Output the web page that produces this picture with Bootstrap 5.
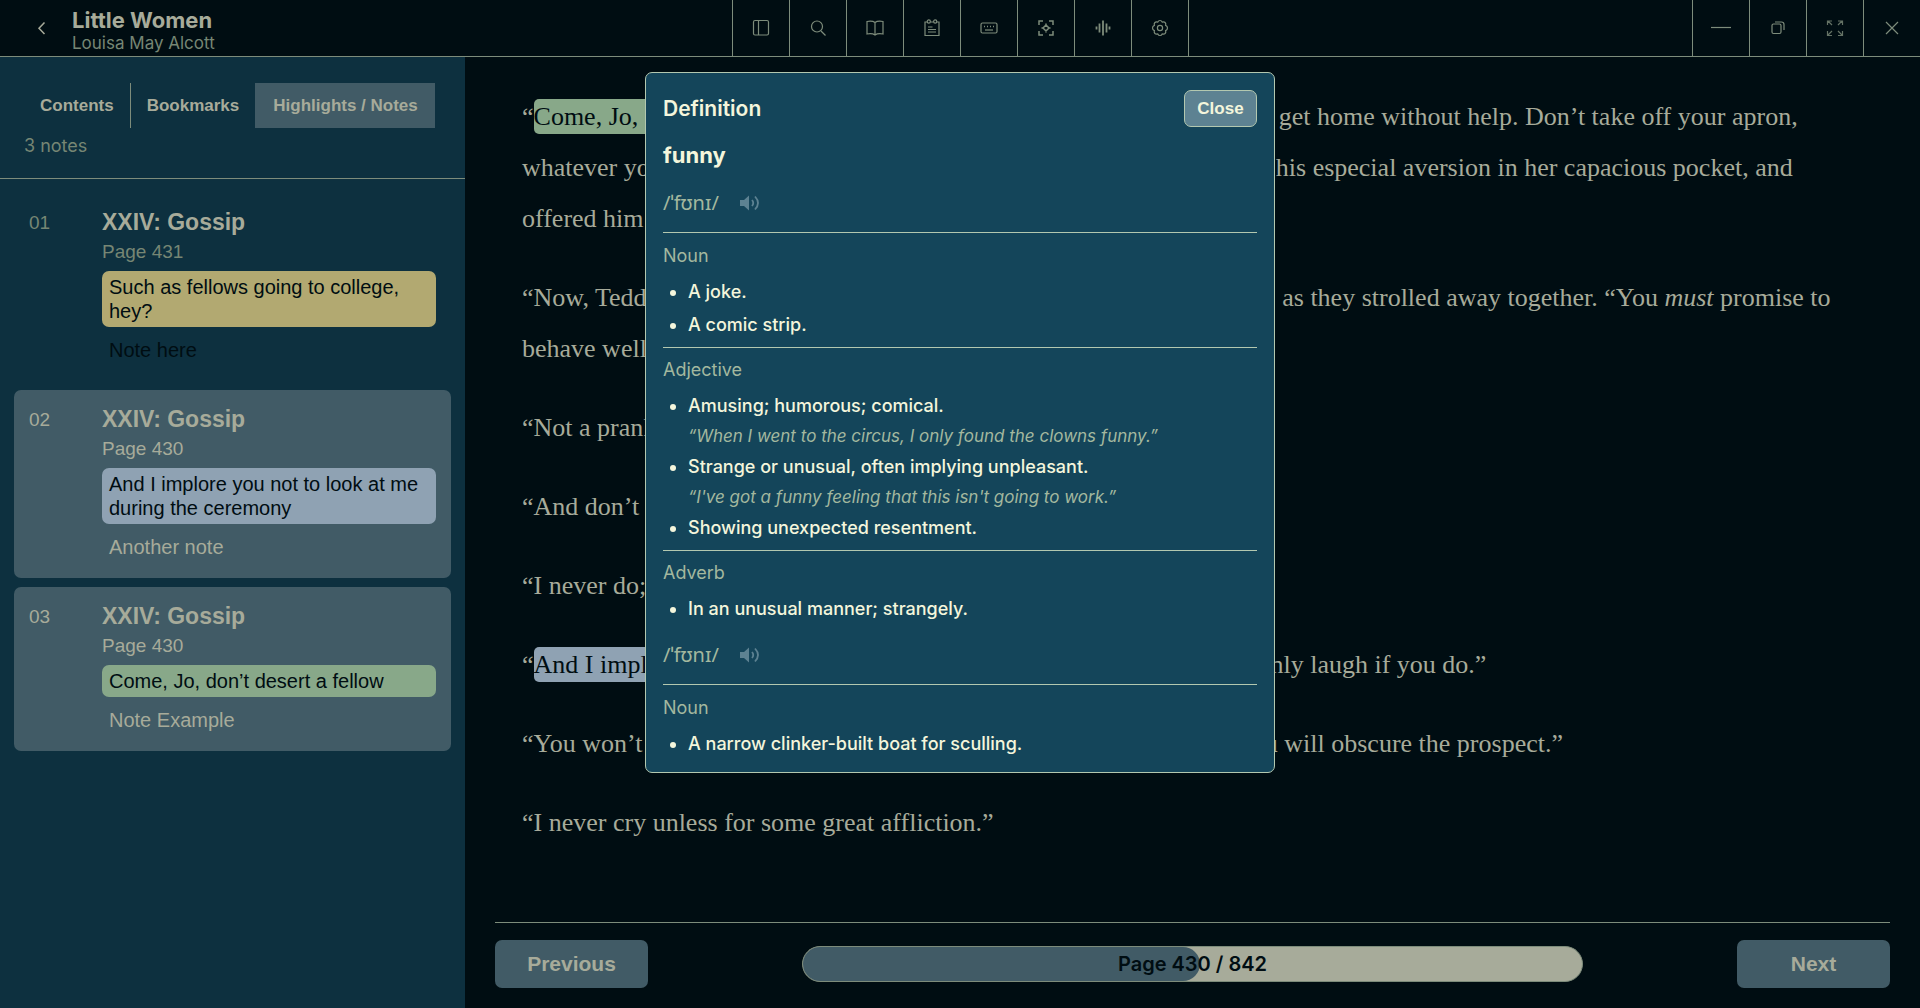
<!DOCTYPE html>
<html lang="en">
<head>
<meta charset="utf-8">
<meta name="viewport" content="width=device-width, initial-scale=1">
<title>Little Women – Reader</title>
<link href="https://cdn.jsdelivr.net/npm/bootstrap@5.3.0/dist/css/bootstrap.min.css" rel="stylesheet">
<style>
  :root { --ink: #000d12; --pane: #0d303f; --raised: #415b66; --rule: #7d8c7b; --soft: #a7ab9a; --dim: #768674; --pop: #14455a; --pop-line: #b3c8b0; --cream: #f4f6dc; }
  body { background: var(--ink); color: var(--soft); font-family: Inter, sans-serif; font-size: 18px; line-height: 24px; }
  .sans { font-family: "Liberation Sans", Arial, sans-serif; }
  .app-bar { height: 57px; border-bottom: 1px solid var(--rule); }
  .app-side { flex: 1 1 0; }
  .book-title { font-size: 22px; line-height: 25px; font-weight: 700; }
  .book-author { font-size: 17px; line-height: 20px; color: var(--dim); }
  .tool { width: 57px; height: 56px; border: 0; border-left: 1px solid var(--rule); background: none; color: var(--rule); padding: 0; }
  .tools { border-right: 1px solid var(--rule); }
  .tool svg, .back svg { fill: none; stroke: currentColor; stroke-width: 1.2; display: block; margin: auto; }
  .back { width: 72px; padding: 0 0 0 14px; border: 0; background: none; color: var(--soft); }
  .side-pane { width: 465px; background: var(--pane); }
  .side-top { border-bottom: 1px solid var(--rule); padding: 26px 24px 0; height: 122px; }
  .tab { height: 45px; padding: 0 16px; border: 0; background: none; color: var(--soft); font-weight: 700; font-size: 17px; }
  .tab + .tab { border-left: 1px solid var(--rule); }
  .tab.tab.on { background: var(--raised); border-left-color: var(--raised); padding: 0 17px; }
  .count { color: var(--dim); margin-top: 6px; }
  .notes { padding: 14px; gap: 9px; }
  .note-item { padding: 14px 15px 19px; border-radius: 7px; font-size: 20px; }
  .note-item.lit { background: var(--raised); }
  .note-no { width: 73px; flex: none; font-size: 19px; line-height: 32px; }
  .note-ttl { font-size: 23px; line-height: 31px; font-weight: 700; margin: 0; }
  .note-pg { font-size: 19px; line-height: 28px; }
  .quote { color: var(--ink); border-radius: 7px; padding: 4px 7px; margin: 5px 0 11px; }
  .note-txt { padding: 0 7px; }
  .note-txt.inked { color: var(--ink); }
  .muted { color: var(--dim); }
  .yel { background: #b2a971; } .blu { background: #8fa2b3; } .grn { background: #88a889; }
  .page-text { font: 26px/51px "Liberation Serif", "Times New Roman", serif; padding: 34px 27px 0; }
  .page-text p { margin: 0 0 28px; }
  .page-text mark { color: var(--ink); padding: 3px 0; border-radius: 5px; }
  .page-text mark.grn { background: #88a889; } .page-text mark.blu { background: #8fa2b3; }
  .reader { padding: 0 30px; }
  .pager { border-top: 1px solid var(--rule); padding: 17px 0 20px; }
  .turn { width: 153px; height: 48px; border: 0; border-radius: 7px; background: var(--raised); color: var(--soft); font-size: 21px; font-weight: 700; }
  .meter { width: 56%; height: 36px; border: 1px solid var(--rule); border-radius: 18px; background: var(--soft); }
  .meter-fill { background: var(--raised); border-radius: 18px; }
  .meter-label { color: var(--ink); font-size: 20px; font-weight: 600; }
  .definition { top: 72px; width: 630px; background: var(--pop); border: 1px solid var(--pop-line); border-radius: 7px; padding: 17px 17px 6px; color: var(--cream); z-index: 10; }
  .definition h2 { font-size: 21px; line-height: 32px; font-weight: 600; margin: 0; }
  .definition h3 { font-size: 22px; line-height: 32px; font-weight: 700; margin: 12px 0 18px; }
  .close-btn { height: 37px; width: 73px; border: 1px solid var(--pop-line); border-radius: 7px; background: #5d8292; color: var(--cream); font-size: 17px; font-weight: 700; }
  .phon { margin: 10px 0 15px; height: 28px; color: #a3b89f; gap: 20px; font-family: "Noto Sans", sans-serif; font-size: 20px; }
  .speak { border: 0; padding: 0; background: none; color: #5d8292; }
  .sense { border-top: 1px solid var(--pop-line); padding: 8px 0 6px; }
  .phon + .sense { padding-top: 9px; }
  .kind { color: #a3b89f; line-height: 28px; margin-bottom: 5px; font-size: 18px; font-weight: 400; }
  .sense ul { margin: 0; padding-left: 25px; font-weight: 500; line-height: 33px; }
  .sense q { display: block; quotes: none; font-style: italic; font-weight: 400; font-size: 17px; line-height: 28px; color: #a3b89f; }
</style>
</head>
<body class="min-vh-100 d-flex flex-column">

<header class="app-bar d-flex">
  <div class="app-side d-flex">
    <button class="back" aria-label="Back"><svg width="16" height="16" viewBox="0 0 16 16"><path d="M9.500 2.500 4 8.300l5.500 5.700" stroke-width="1.500"/></svg></button>
    <div class="pt-2">
      <div class="book-title">Little Women</div>
      <div class="book-author">Louisa May Alcott</div>
    </div>
  </div>
  <nav class="tools d-flex" aria-label="Tools">
    <button class="tool" aria-label="Sidebar"><svg width="18" height="18" viewBox="0 0 18 18"><rect x="1.500" y="1.500" width="15" height="14.500" rx="1.500"/><path d="M6.500 1.500V16"/></svg></button>
    <button class="tool" aria-label="Search"><svg width="18" height="18" viewBox="0 0 18 18"><circle cx="8" cy="7.500" r="5.500"/><path d="m12 12 4.500 4.500"/></svg></button>
    <button class="tool" aria-label="Read"><svg width="18" height="18" viewBox="0 0 18 18"><path d="M9 3.500C7 2 4 2 1 2.500v12.500c3-.6 6-.4 8 1 2-1.400 5-1.600 8-1V2.500C14 2 11 2 9 3.500zV16"/></svg></button>
    <button class="tool" aria-label="Notes"><svg width="18" height="18" viewBox="0 0 18 18"><path d="M4 3H2v13.500h14V3h-2M7.500 3h3M5 8h4.500M5 10.500h8M5 13h8"/><circle cx="5.800" cy="2.500" r="1.600"/><circle cx="12.200" cy="2.500" r="1.600"/></svg></button>
    <button class="tool" aria-label="Keyboard"><svg width="18" height="18" viewBox="0 0 18 18"><rect x="1" y="4" width="16" height="10" rx="1.500"/><path d="M4 7.500h11" stroke-dasharray="1 2" stroke-width="1.400"/><path d="M5 11h8"/></svg></button>
    <button class="tool" aria-label="Focus"><svg width="18" height="18" viewBox="0 0 18 18"><path d="M6 2H2v4M12 2h4v4M2 12v4h4M16 12v4h-4" stroke-width="1.500"/><path d="M9 4.500v2M9 11.500v2M4.500 9h2M11.500 9h2M9 6l3 3-3 3-3-3z" stroke-width="1.500"/></svg></button>
    <button class="tool" aria-label="Read aloud"><svg width="18" height="18" viewBox="0 0 18 18"><path d="M2.500 7.500v3M5.500 4.500v9M9 1.500v15M12.500 4.500v9M15.500 7.500v3" stroke-width="1.800"/></svg></button>
    <button class="tool" aria-label="Settings"><svg width="18" height="18" viewBox="0 0 18 18"><circle cx="9" cy="9" r="2.600"/><path d="M9 1.500q1.500 0 2.200 1.600 1.900-.6 2.900.4 1.100 1.200.5 2.900 1.900.8 1.900 2.600t-1.900 2.600q.6 1.700-.5 2.900-1 1-2.900.4Q10.500 16.500 9 16.500t-2.200-1.600q-1.900.6-2.900-.4-1.100-1.200-.5-2.900Q1.500 10.800 1.500 9t1.900-2.600q-.6-1.700.5-2.900 1-1 2.900-.4Q7.500 1.500 9 1.500z"/></svg></button>
  </nav>
  <div class="app-side d-flex justify-content-end">
    <button class="tool" aria-label="Minimise"><svg width="20" height="18" viewBox="0 0 20 18"><path d="M0 8.500h20"/></svg></button>
    <button class="tool" aria-label="Restore"><svg width="18" height="18" viewBox="0 0 18 18"><rect x="3" y="5" width="9" height="9.500" rx="1.500"/><path d="M6 3h6.500Q15 3 15 5.500V11"/></svg></button>
    <button class="tool" aria-label="Full screen"><svg width="18" height="18" viewBox="0 0 18 18" stroke-opacity=".8"><path d="M1.500 6V2H6M2 2l4 4M12 2h4.500v4M16 2l-4 4M1.500 12v4.500H6M2 16l4-4M12 16.500h4.500V12M16 16l-4-4"/></svg></button>
    <button class="tool" aria-label="Close window"><svg width="18" height="18" viewBox="0 0 18 18"><path d="m3 3 12 12M15 3 3 15"/></svg></button>
  </div>
</header>

<div class="d-flex flex-grow-1">
  <aside class="side-pane flex-shrink-0">
    <div class="side-top">
      <div class="d-flex sans" role="tablist">
        <button class="tab" role="tab">Contents</button>
        <button class="tab" role="tab">Bookmarks</button>
        <button class="tab on" role="tab" aria-selected="true">Highlights / Notes</button>
      </div>
      <div class="count">3 notes</div>
    </div>
    <div class="notes d-flex flex-column sans">
      <article class="note-item d-flex">
        <div class="note-no muted">01</div>
        <div class="flex-grow-1">
          <h2 class="note-ttl">XXIV: Gossip</h2>
          <div class="note-pg muted">Page 431</div>
          <div class="quote yel">Such as fellows going to college, hey?</div>
          <div class="note-txt inked">Note here</div>
        </div>
      </article>
      <article class="note-item lit d-flex">
        <div class="note-no">02</div>
        <div class="flex-grow-1">
          <h2 class="note-ttl">XXIV: Gossip</h2>
          <div class="note-pg">Page 430</div>
          <div class="quote blu">And I implore you not to look at me during the ceremony</div>
          <div class="note-txt">Another note</div>
        </div>
      </article>
      <article class="note-item lit d-flex">
        <div class="note-no">03</div>
        <div class="flex-grow-1">
          <h2 class="note-ttl">XXIV: Gossip</h2>
          <div class="note-pg">Page 430</div>
          <div class="quote grn">Come, Jo, don’t desert a fellow</div>
          <div class="note-txt">Note Example</div>
        </div>
      </article>
    </div>
  </aside>

  <main class="reader flex-grow-1 d-flex flex-column">
    <div class="page-text flex-grow-1">
      <p>“<mark class="grn">Come, Jo, don’t desert a fellow</mark>, but lend me your arm, for I shall never get home without help. Don’t take off your apron, whatever you do, it’s peculiarly becoming,” said Laurie, as Jo bestowed his especial aversion in her capacious pocket, and offered him her arm to support his feeble steps.</p>
      <p>“Now, Teddy, I want to talk seriously to you about tomorrow,” began Jo, as they strolled away together. “You <em>must</em> promise to behave well, and not cut up any pranks, and spoil our plans.”</p>
      <p>“Not a prank.”</p>
      <p>“And don’t say funny things when we ought to be sober.”</p>
      <p>“I never do; you are the one for that.”</p>
      <p>“<mark class="blu">And I implore you not to look at me during the ceremony</mark>. I shall certainly laugh if you do.”</p>
      <p>“You won’t see me, you’ll be crying so hard that the thick fog round you will obscure the prospect.”</p>
      <p>“I never cry unless for some great affliction.”</p>
    </div>
    <footer class="pager d-flex align-items-center justify-content-between">
      <button class="turn sans">Previous</button>
      <div class="meter position-relative" role="progressbar" aria-label="Reading progress" aria-valuenow="430" aria-valuemin="1" aria-valuemax="842">
        <div class="meter-fill h-100" style="width:51%"></div>
        <div class="meter-label position-absolute top-0 start-0 w-100 h-100 d-flex align-items-center justify-content-center">Page 430 / 842</div>
      </div>
      <button class="turn sans">Next</button>
    </footer>
  </main>
</div>

<section class="definition position-absolute start-50 translate-middle-x" role="dialog" aria-labelledby="def-title">
  <div class="d-flex justify-content-between align-items-center">
    <h2 id="def-title">Definition</h2>
    <button class="close-btn sans">Close</button>
  </div>
  <h3>funny</h3>
  <div class="phon d-flex align-items-center"><span>/ˈfʊnɪ/</span>
    <button class="speak d-flex" aria-label="Play pronunciation"><svg width="22" height="18" viewBox="0 0 22 18"><path fill="currentColor" d="M1 6h4l5-4.500v15L5 12H1z"/><path d="M13 6q2.500 3 0 6M16 2.500q6 6.500 0 13" fill="none" stroke="currentColor" stroke-width="1.800"/></svg></button>
  </div>
  <div class="sense"><div class="kind">Noun</div><ul><li>A joke.</li><li>A comic strip.</li></ul></div>
  <div class="sense"><div class="kind">Adjective</div><ul>
    <li>Amusing; humorous; comical.<q>“When I went to the circus, I only found the clowns funny.”</q></li>
    <li>Strange or unusual, often implying unpleasant.<q>“I've got a funny feeling that this isn't going to work.”</q></li>
    <li>Showing unexpected resentment.</li></ul></div>
  <div class="sense"><div class="kind">Adverb</div><ul><li>In an unusual manner; strangely.</li></ul></div>
  <div class="phon d-flex align-items-center"><span>/ˈfʊnɪ/</span>
    <button class="speak d-flex" aria-label="Play pronunciation"><svg width="22" height="18" viewBox="0 0 22 18"><path fill="currentColor" d="M1 6h4l5-4.500v15L5 12H1z"/><path d="M13 6q2.500 3 0 6M16 2.500q6 6.500 0 13" fill="none" stroke="currentColor" stroke-width="1.800"/></svg></button>
  </div>
  <div class="sense"><div class="kind">Noun</div><ul><li>A narrow clinker-built boat for sculling.</li></ul></div>
</section>

<script src="https://cdn.jsdelivr.net/npm/bootstrap@5.3.0/dist/js/bootstrap.bundle.min.js"></script>
</body>
</html>
